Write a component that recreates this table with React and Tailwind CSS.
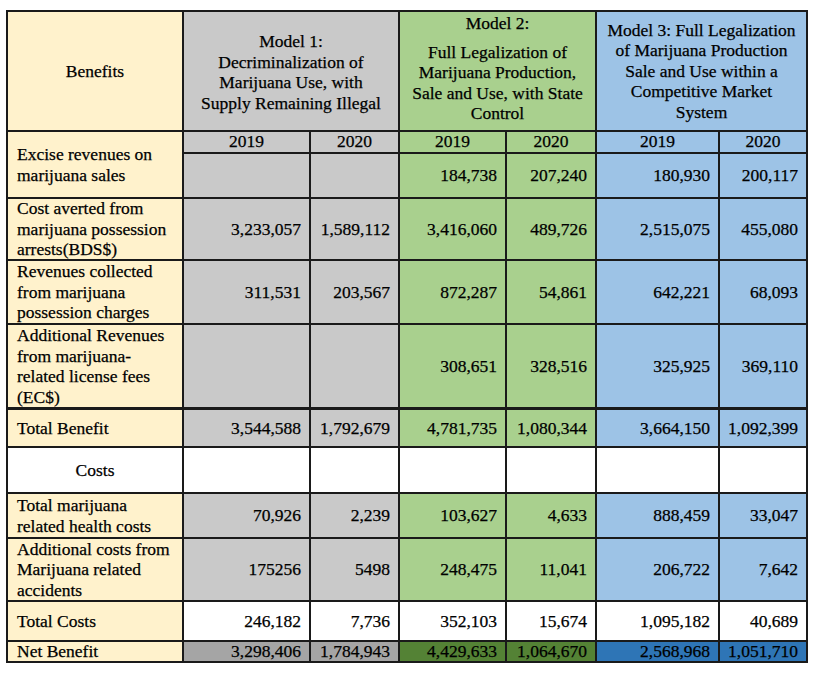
import { Fragment } from "react";

const label = "bg-[#fff2cc] flex items-center pl-[9px] pr-1 whitespace-nowrap";
const num = "flex items-center justify-end pr-[8px]";

const colors = {
  gray: "bg-[#c9c9c9]",
  green: "bg-[#a9d08e]",
  blue: "bg-[#9dc3e6]",
  white: "bg-white",
};

const rows = [
  {
    label: ["Cost averted from", "marijuana possession", "arrests(BDS$)"],
    values: ["3,233,057", "1,589,112", "3,416,060", "489,726", "2,515,075", "455,080"],
  },
  {
    label: ["Revenues collected", "from marijuana", "possession charges"],
    values: ["311,531", "203,567", "872,287", "54,861", "642,221", "68,093"],
  },
  {
    label: ["Additional Revenues", "from marijuana-", "related license fees", "(EC$)"],
    values: ["", "", "308,651", "328,516", "325,925", "369,110"],
  },
];

const costRows = [
  {
    label: ["Total marijuana", "related health costs"],
    values: ["70,926", "2,239", "103,627", "4,633", "888,459", "33,047"],
  },
  {
    label: ["Additional costs from", "Marijuana related", "accidents"],
    values: ["175256", "5498", "248,475", "11,041", "206,722", "7,642"],
  },
];

const modelColor = ["gray", "gray", "green", "green", "blue", "blue"];

const Lines = ({ lines }) => (
  <div>
    {lines.map((l) => (
      <div key={l}>{l}</div>
    ))}
  </div>
);

const ValueCells = ({ values, white }) =>
  values.map((v, i) => (
    <div key={i} className={`${num} ${white ? colors.white : colors[modelColor[i]]}`}>
      {v}
    </div>
  ));

export default function App() {
  return (
    <div className="bg-white w-[814px] h-[677px] pl-[6px] pt-[10px]" style={{ fontFamily: '"Liberation Serif", "Times New Roman", serif' }}>
      <div className="inline-grid gap-[2px] p-[2px] bg-[#1a1a1a] text-[17.5px] leading-[20.5px] text-black [-webkit-text-stroke:0.25px] grid-cols-[174px_125px_87px_105px_88px_121px_86px] grid-rows-[118px_20px_43px_60px_62px_82px_37px_44px_43px_61px_38px_19px]">
        {/* HEADER */}
        <div className="bg-[#fff2cc] flex items-center justify-center">Benefits</div>
        <div className="col-span-2 bg-[#c9c9c9] flex items-center justify-center text-center whitespace-nowrap pt-[2px]">
          <Lines lines={["Model 1:", "Decriminalization of", "Marijuana Use, with", "Supply Remaining Illegal"]} />
        </div>
        <div className="col-span-2 bg-[#a9d08e] flex flex-col items-center text-center pt-[1px] whitespace-nowrap">
          <div>Model 2:</div>
          <div className="mt-[8px]">Full Legalization of</div>
          <div>Marijuana Production,</div>
          <div>Sale and Use, with State</div>
          <div>Control</div>
        </div>
        <div className="col-span-2 bg-[#9dc3e6] flex items-center justify-center text-center whitespace-nowrap">
          <Lines lines={["Model 3: Full Legalization", "of Marijuana Production", "Sale and Use within a", "Competitive Market", "System"]} />
        </div>

        {/* YEARS + EXCISE */}
        <div className={`${label} row-span-2`}>
          <Lines lines={["Excise revenues on", "marijuana sales"]} />
        </div>
        {modelColor.map((c, i) => (
          <div key={i} className={`${colors[c]} flex items-center justify-center leading-none`}>
            {i % 2 === 0 ? "2019" : "2020"}
          </div>
        ))}
        <ValueCells values={["", "", "184,738", "207,240", "180,930", "200,117"]} />

        {rows.map((r) => (
          <Fragment key={r.label[0]}>
            <div className={label}>
              <Lines lines={r.label} />
            </div>
            <ValueCells values={r.values} />
          </Fragment>
        ))}

        {/* TOTAL BENEFIT */}
        <div className={`${label} border-t border-[#1a1a1a]`}>Total Benefit</div>
        {["3,544,588", "1,792,679", "4,781,735", "1,080,344", "3,664,150", "1,092,399"].map((v, i) => (
          <div key={i} className={`${num} ${colors[modelColor[i]]} border-t border-[#1a1a1a]`}>
            {v}
          </div>
        ))}

        {/* COSTS */}
        <div className="bg-white flex items-center justify-center">Costs</div>
        <ValueCells values={["", "", "", "", "", ""]} white />

        {costRows.map((r) => (
          <Fragment key={r.label[0]}>
            <div className={label}>
              <Lines lines={r.label} />
            </div>
            <ValueCells values={r.values} />
          </Fragment>
        ))}

        <div className={label}>Total Costs</div>
        <ValueCells values={["246,182", "7,736", "352,103", "15,674", "1,095,182", "40,689"]} white />

        {/* NET BENEFIT */}
        <div className={`${label} leading-none`}>Net Benefit</div>
        {[
          ["3,298,406", "bg-[#a5a5a5]"],
          ["1,784,943", "bg-[#a5a5a5]"],
          ["4,429,633", "bg-[#548235]"],
          ["1,064,670", "bg-[#548235]"],
          ["2,568,968", "bg-[#2e75b6]"],
          ["1,051,710", "bg-[#2e75b6]"],
        ].map(([v, bg]) => (
          <div key={v} className={`${num} ${bg} leading-none`}>
            {v}
          </div>
        ))}
      </div>
    </div>
  );
}
